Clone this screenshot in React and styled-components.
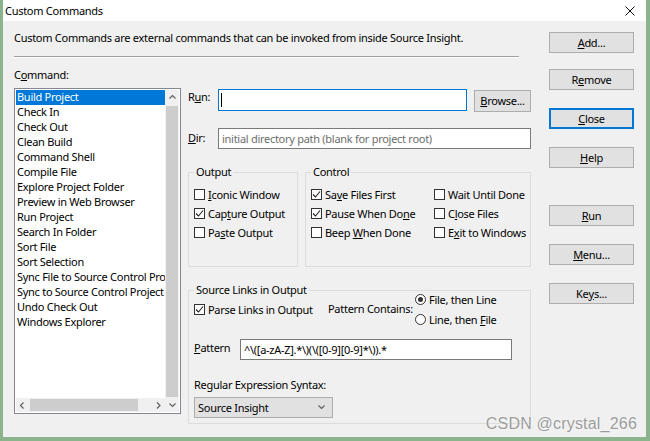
import styled, { createGlobalStyle } from "styled-components";

const GlobalStyle = createGlobalStyle`
  html, body {
    margin: 0;
    padding: 0;
    background: #f0f0f0;
  }
  body {
    font-family: "Noto Sans", "Open Sans", sans-serif;
    font-size: 11px;
    letter-spacing: -0.28px;
    color: #000;
  }
`;

const Window = styled.div`
  position: relative;
  box-sizing: border-box;
  width: 650px;
  height: 441px;
  display: flex;
  flex-direction: column;
  background: #f0f0f0;
  border-left: 3px solid #8cb48c;
  border-right: 4px solid #8cb48c;
  border-bottom: 4px solid #8cb48c;
`;

const TitleBar = styled.div`
  height: 21px;
  flex-shrink: 0;
  background: #fff;
  display: flex;
  align-items: center;
  justify-content: space-between;
  padding: 0 11px 0 2px;
`;

const Title = styled.span`
  line-height: 14px;
`;

const Body = styled.div`
  flex: 1;
  display: flex;
  gap: 18px;
  padding: 10px 12px 0 11px;
`;

const Main = styled.div`
  width: 517px;
  display: flex;
  flex-direction: column;
`;

const Text = styled.div`
  line-height: 14px;
  height: 14px;
  white-space: nowrap;
`;

const Separator = styled.div`
  width: 505px;
  height: 1px;
  margin-top: 11px;
  background: #a0a0a0;
  border-bottom: 1px solid #fff;
`;

const CommandLabel = styled(Text)`
  margin-top: 10px;
`;

const U = styled.span`
  text-decoration: underline;
  text-underline-offset: 1px;
`;

const Content = styled.div`
  display: flex;
  gap: 7px;
  margin-top: 6px;
`;

const ListBox = styled.div`
  box-sizing: border-box;
  width: 167px;
  height: 326px;
  background: #fff;
  border: 1px solid #828790;
  padding: 1px;
  display: grid;
  grid-template-columns: 1fr 14px;
  grid-template-rows: 1fr 14px;
`;

const Items = styled.div`
  overflow: hidden;
`;

const Item = styled.div`
  height: 15px;
  line-height: 14px;
  padding-left: 1px;
  white-space: nowrap;
  background: ${(p) => (p.$selected ? "#0078d7" : "transparent")};
  color: ${(p) => (p.$selected ? "#fff" : "#000")};
`;

const VScroll = styled.div`
  grid-column: 2;
  grid-row: 1 / span 2;
  display: flex;
  flex-direction: column;
  background: #f0f0f0;
`;

const HScroll = styled.div`
  grid-column: 1;
  grid-row: 2;
  display: flex;
  align-items: stretch;
  background: #f0f0f0;
`;

const Arrow = styled.div`
  width: ${(p) => (p.$h ? "13px" : "14px")};
  height: 14px;
  flex-shrink: 0;
  display: flex;
  align-items: center;
  justify-content: center;
`;

const VThumb = styled.div`
  flex: 1;
  margin: 2px 1px 1px 1px;
  background: #cdcdcd;
`;

const HThumb = styled.div`
  width: 108px;
  margin: 1px 0 1px 1px;
  background: #cdcdcd;
`;

const HTrackRest = styled.div`
  flex: 1;
`;

const Panel = styled.div`
  width: 343px;
  display: flex;
  flex-direction: column;
  padding-top: 1px;
`;

const FieldRow = styled.div`
  display: flex;
  align-items: flex-start;
  margin-top: ${(p) => p.$top || 0}px;
`;

const FieldLabel = styled.div`
  width: 30px;
  line-height: 14px;
  padding-top: ${(p) => p.$pt || 2}px;
`;

const Input = styled.div`
  box-sizing: border-box;
  width: ${(p) => p.$w}px;
  height: ${(p) => p.$h || 21}px;
  background: #fff;
  border: 1px solid ${(p) => (p.$focus ? "#0078d7" : "#7a7a7a")};
  display: flex;
  align-items: center;
  padding-left: 3px;
  color: ${(p) => (p.$placeholder ? "#6d6d6d" : "#000")};
  white-space: nowrap;
  overflow: hidden;
`;

const Caret = styled.span`
  width: 1px;
  height: 14px;
  background: #000;
  margin-left: -1px;
`;

const Button = styled.div`
  box-sizing: border-box;
  width: ${(p) => p.$w || 85}px;
  height: ${(p) => p.$h || 21}px;
  margin-top: ${(p) => p.$top || 0}px;
  margin-left: ${(p) => p.$left || 0}px;
  background: #e1e1e1;
  border: 1px solid ${(p) => (p.$default ? "#0078d7" : "#adadad")};
  box-shadow: ${(p) => (p.$default ? "inset 0 0 0 1px #0078d7" : "none")};
  display: flex;
  align-items: center;
  justify-content: center;
  line-height: 14px;
  flex-shrink: 0;
`;

const GroupsRow = styled.div`
  display: flex;
  gap: 7px;
  margin-top: 23px;
`;

const Group = styled.div`
  position: relative;
  box-sizing: border-box;
  width: ${(p) => p.$w}px;
  height: ${(p) => p.$h}px;
  border: 1px solid #dcdcdc;
  padding: 13px 0 0 5px;
  margin-top: ${(p) => p.$top || 0}px;
`;

const Legend = styled.span`
  position: absolute;
  top: -8px;
  left: 5px;
  padding: 0 2px;
  background: #f0f0f0;
  line-height: 14px;
  white-space: nowrap;
`;

const CheckList = styled.div`
  display: flex;
  flex-direction: column;
  gap: 3px;
`;

const ControlGrid = styled.div`
  display: grid;
  grid-template-columns: 123px auto;
  row-gap: 3px;
`;

const CheckRow = styled.div`
  display: flex;
  align-items: center;
  gap: 3px;
  height: 16px;
  white-space: nowrap;
`;

const Box = styled.span`
  box-sizing: border-box;
  width: 11px;
  height: 11px;
  border: 1px solid #333;
  background: #fff;
  display: flex;
  align-items: center;
  justify-content: center;
  flex-shrink: 0;
`;

const Radio = styled.span`
  box-sizing: border-box;
  width: 11px;
  height: 11px;
  border-radius: 50%;
  border: 1px solid #333;
  background: #fff;
  display: flex;
  align-items: center;
  justify-content: center;
  flex-shrink: 0;
  &::after {
    content: "";
    width: 5px;
    height: 5px;
    border-radius: 50%;
    background: ${(p) => (p.$on ? "#333" : "transparent")};
  }
`;

const LinksTop = styled.div`
  display: flex;
  align-items: center;
  margin-top: -13px;
`;

const ParseCell = styled.div`
  width: 134px;
`;

const ContainsLabel = styled.div`
  width: 87px;
  line-height: 14px;
  white-space: nowrap;
`;

const RadioList = styled.div`
  display: flex;
  flex-direction: column;
  gap: 4px;
`;

const PatternRow = styled.div`
  display: flex;
  align-items: center;
  margin-top: 12px;
`;

const PatternLabel = styled.div`
  width: 46px;
  line-height: 14px;
  margin-bottom: 4px;
`;

const SyntaxLabel = styled(Text)`
  margin-top: 18px;
`;

const Combo = styled.div`
  box-sizing: border-box;
  width: 139px;
  height: 21px;
  margin-top: 5px;
  background: #e1e1e1;
  border: 1px solid #adadad;
  display: flex;
  align-items: center;
  justify-content: space-between;
  padding: 0 6px 0 3px;
`;

const Side = styled.div`
  width: 85px;
  display: flex;
  flex-direction: column;
  padding-top: 1px;
`;

const Watermark = styled.div`
  position: absolute;
  right: 9px;
  bottom: 4px;
  font-family: "Liberation Sans", Arial, sans-serif;
  font-size: 16px;
  color: #9c9c9c;
  text-shadow: 0 0 2px #fff;
  letter-spacing: 0.2px;
`;

const Check = ({ on }) => (
  <Box>
    {on && (
      <svg width="9" height="9" viewBox="0 0 9 9">
        <path d="M1 4.5 L3.5 7 L8 1.5" fill="none" stroke="#222" strokeWidth="1.1" />
      </svg>
    )}
  </Box>
);

const Chevron = ({ dir }) => {
  const paths = {
    up: "M1.5 5.5 L4.5 2.5 L7.5 5.5",
    down: "M1.5 2.5 L4.5 5.5 L7.5 2.5",
    left: "M5.5 1.5 L2.5 4.5 L5.5 7.5",
    right: "M3 1.5 L6 4.5 L3 7.5",
  };
  return (
    <svg width="9" height="9" viewBox="0 0 9 9">
      <path d={paths[dir]} fill="none" stroke="#606060" strokeWidth="1.2" />
    </svg>
  );
};

const commands = [
  "Build Project",
  "Check In",
  "Check Out",
  "Clean Build",
  "Command Shell",
  "Compile File",
  "Explore Project Folder",
  "Preview in Web Browser",
  "Run Project",
  "Search In Folder",
  "Sort File",
  "Sort Selection",
  "Sync File to Source Control Project",
  "Sync to Source Control Project",
  "Undo Check Out",
  "Windows Explorer",
];

export default function App() {
  return (
    <>
      <GlobalStyle />
      <Window>
        <TitleBar>
          <Title>Custom Commands</Title>
          <svg width="10" height="10" viewBox="0 0 10 10">
            <path d="M0.5 0.5 L9.5 9.5 M9.5 0.5 L0.5 9.5" stroke="#111" strokeWidth="1" />
          </svg>
        </TitleBar>
        <Body>
          <Main>
            <Text>
              Custom Commands are external commands that can be invoked from inside Source Insight.
            </Text>
            <Separator />
            <CommandLabel>
              C<U>o</U>mmand:
            </CommandLabel>
            <Content>
              <ListBox>
                <Items>
                  {commands.map((c, i) => (
                    <Item key={c} $selected={i === 0}>
                      {c}
                    </Item>
                  ))}
                </Items>
                <VScroll>
                  <Arrow>
                    <Chevron dir="up" />
                  </Arrow>
                  <VThumb />
                  <Arrow>
                    <Chevron dir="down" />
                  </Arrow>
                </VScroll>
                <HScroll>
                  <Arrow $h>
                    <Chevron dir="left" />
                  </Arrow>
                  <HThumb />
                  <HTrackRest />
                  <Arrow $h>
                    <Chevron dir="right" />
                  </Arrow>
                </HScroll>
              </ListBox>
              <Panel>
                <FieldRow>
                  <FieldLabel $pt={1}>
                    R<U>u</U>n:
                  </FieldLabel>
                  <Input $w={249} $h={22} $focus>
                    <Caret />
                  </Input>
                  <Button $w={57} $h={22} $left={7} $top={1}>
                    <U>B</U>rowse...
                  </Button>
                </FieldRow>
                <FieldRow $top={16}>
                  <FieldLabel $pt={3}>
                    <U>D</U>ir:
                  </FieldLabel>
                  <Input $w={313} $placeholder>
                    initial directory path (blank for project root)
                  </Input>
                </FieldRow>
                <GroupsRow>
                  <Group $w={110} $h={95}>
                    <Legend>Output</Legend>
                    <CheckList>
                      <CheckRow>
                        <Check />
                        <span>
                          <U>I</U>conic Window
                        </span>
                      </CheckRow>
                      <CheckRow>
                        <Check on />
                        <span>
                          Cap<U>t</U>ure Output
                        </span>
                      </CheckRow>
                      <CheckRow>
                        <Check />
                        <span>
                          Pa<U>s</U>te Output
                        </span>
                      </CheckRow>
                    </CheckList>
                  </Group>
                  <Group $w={226} $h={95}>
                    <Legend>Control</Legend>
                    <ControlGrid>
                      <CheckRow>
                        <Check on />
                        <span>
                          Sa<U>v</U>e Files First
                        </span>
                      </CheckRow>
                      <CheckRow>
                        <Check />
                        <span>Wait Until Done</span>
                      </CheckRow>
                      <CheckRow>
                        <Check on />
                        <span>
                          Pause When Do<U>n</U>e
                        </span>
                      </CheckRow>
                      <CheckRow>
                        <Check />
                        <span>
                          C<U>l</U>ose Files
                        </span>
                      </CheckRow>
                      <CheckRow>
                        <Check />
                        <span>
                          Beep <U>W</U>hen Done
                        </span>
                      </CheckRow>
                      <CheckRow>
                        <Check />
                        <span>
                          E<U>x</U>it to Windows
                        </span>
                      </CheckRow>
                    </ControlGrid>
                  </Group>
                </GroupsRow>
                <Group $w={343} $h={134} $top={23}>
                  <Legend>Source Links in Output</Legend>
                  <LinksTop>
                    <ParseCell>
                      <CheckRow>
                        <Check on />
                        <span>Parse Links in Output</span>
                      </CheckRow>
                    </ParseCell>
                    <ContainsLabel>Pattern Contains:</ContainsLabel>
                    <RadioList>
                      <CheckRow>
                        <Radio $on />
                        <span>File, then Line</span>
                      </CheckRow>
                      <CheckRow>
                        <Radio />
                        <span>
                          Line, then <U>F</U>ile
                        </span>
                      </CheckRow>
                    </RadioList>
                  </LinksTop>
                  <PatternRow>
                    <PatternLabel>
                      <U>P</U>attern
                    </PatternLabel>
                    <Input $w={272}>^\([a-zA-Z].*\)(\([0-9][0-9]*\)).*</Input>
                  </PatternRow>
                  <SyntaxLabel>Regular Expression Syntax:</SyntaxLabel>
                  <Combo>
                    <span>Source Insight</span>
                    <Chevron dir="down" />
                  </Combo>
                </Group>
              </Panel>
            </Content>
          </Main>
          <Side>
            <Button>
              <U>A</U>dd...
            </Button>
            <Button $top={16}>
              R<U>e</U>move
            </Button>
            <Button $top={18} $default>
              <U>C</U>lose
            </Button>
            <Button $top={18}>
              <U>H</U>elp
            </Button>
            <Button $top={37}>
              <U>R</U>un
            </Button>
            <Button $top={18}>
              <U>M</U>enu...
            </Button>
            <Button $top={18}>
              Ke<U>y</U>s...
            </Button>
          </Side>
        </Body>
        <Watermark>CSDN @crystal_266</Watermark>
      </Window>
    </>
  );
}
